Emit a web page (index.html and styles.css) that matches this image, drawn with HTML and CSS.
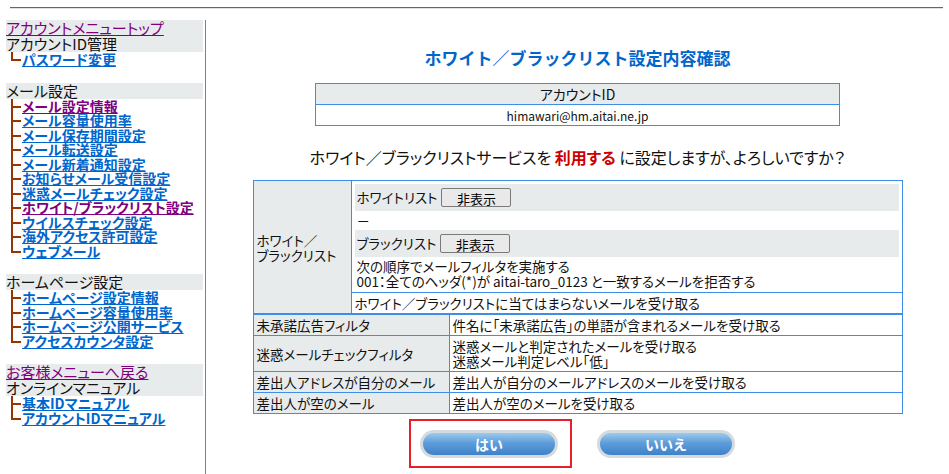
FILE: index.html
```html
<!DOCTYPE html>
<html lang="ja">
<head>
  <meta charset="UTF-8">
  <title>ホワイト／ブラックリスト設定内容確認</title>
  <link rel="stylesheet" href="styles.css">
</head>
<body>

<div class="top-line"></div>

<div class="page">
  <div class="side-menu">
    <div class="menu-head"><a href="#" class="visited">アカウントメニュートップ</a></div>
    <div class="menu-head">アカウントID管理</div>
    <ul class="menu-tree">
      <li><a href="#">パスワード変更</a></li>
    </ul>

    <div class="menu-head">メール設定</div>
    <ul class="menu-tree">
      <li><a href="#" class="visited">メール設定情報</a></li>
      <li><a href="#">メール容量使用率</a></li>
      <li><a href="#">メール保存期間設定</a></li>
      <li><a href="#">メール転送設定</a></li>
      <li><a href="#">メール新着通知設定</a></li>
      <li><a href="#">お知らせメール受信設定</a></li>
      <li><a href="#">迷惑メールチェック設定</a></li>
      <li><a href="#" class="visited">ホワイト/ブラックリスト設定</a></li>
      <li><a href="#">ウイルスチェック設定</a></li>
      <li><a href="#">海外アクセス許可設定</a></li>
      <li><a href="#">ウェブメール</a></li>
    </ul>

    <div class="menu-head">ホームページ設定</div>
    <ul class="menu-tree">
      <li><a href="#">ホームページ設定情報</a></li>
      <li><a href="#">ホームページ容量使用率</a></li>
      <li><a href="#">ホームページ公開サービス</a></li>
      <li><a href="#">アクセスカウンタ設定</a></li>
    </ul>

    <div class="menu-head"><a href="#" class="visited">お客様メニューへ戻る</a></div>
    <div class="menu-head">オンラインマニュアル</div>
    <ul class="menu-tree">
      <li><a href="#">基本IDマニュアル</a></li>
      <li><a href="#">アカウントIDマニュアル</a></li>
    </ul>
  </div>

  <div class="content">
    <h1 class="page-title">ホワイト／ブラックリスト設定内容確認</h1>

    <table class="account-table">
      <tr><th>アカウントID</th></tr>
      <tr><td>himawari@hm.aitai.ne.jp</td></tr>
    </table>

    <p class="confirm-text">ホワイト／ブラックリストサービスを <strong>利用する</strong> に設定しますが、よろしいですか？</p>

    <table class="list-table">
      <tr>
        <th class="col-narrow" rowspan="2">ホワイト／<br>ブラックリスト</th>
        <td class="inner-cell">
          <div class="sub-row gray">ホワイトリスト <button class="small-btn">非表示</button></div>
          <div class="sub-row">－</div>
          <div class="sub-row gray">ブラックリスト <button class="small-btn">非表示</button></div>
          <div class="sub-text">次の順序でメールフィルタを実施する<br>001：全てのヘッダ(*)が aitai-taro_0123 と一致するメールを拒否する</div>
        </td>
      </tr>
      <tr>
        <td>ホワイト／ブラックリストに当てはまらないメールを受け取る</td>
      </tr>
    </table>

    <table class="list-table">
      <tr>
        <th class="col-wide">未承諾広告フィルタ</th>
        <td>件名に「未承諾広告」の単語が含まれるメールを受け取る</td>
      </tr>
      <tr>
        <th>迷惑メールチェックフィルタ</th>
        <td>迷惑メールと判定されたメールを受け取る<br>迷惑メール判定レベル「低」</td>
      </tr>
      <tr>
        <th>差出人アドレスが自分のメール</th>
        <td>差出人が自分のメールアドレスのメールを受け取る</td>
      </tr>
      <tr>
        <th>差出人が空のメール</th>
        <td>差出人が空のメールを受け取る</td>
      </tr>
    </table>

    <div class="btn-row">
      <span class="btn-wrap marked"><button class="pill-btn">はい</button></span>
      <span class="btn-wrap"><button class="pill-btn">いいえ</button></span>
    </div>
  </div>
</div>

</body>
</html>
```

FILE: styles.css
```css
* {
  margin: 0;
  padding: 0;
  box-sizing: border-box;
}

body {
  font-family: "Noto Sans CJK JP", "Noto Sans", sans-serif;
  font-feature-settings: "palt";
  font-size: 14px;
  color: #111;
  background-color: #fff;
}

.top-line {
  height: 2px;
  margin: 7px 6px 0 10px;
  border-top: 1px solid #666;
  border-bottom: 1px solid #e2e2e2;
}

.page {
  display: flex;
  margin-top: 11px;
  min-height: 454px;
}

/* Side menu */
.side-menu {
  width: 200px;
  margin-left: 6px;
  padding-right: 2px;
  border-right: 1px solid #3d8fe6;
}

.menu-head {
  background-color: #e8ebec;
  line-height: 16px;
  font-size: 15px;
  white-space: nowrap;
}

.menu-head a {
  color: #800080;
}

.menu-tree {
  list-style: none;
  margin-bottom: 16px;
}

.menu-tree li {
  position: relative;
  padding-left: 16px;
  line-height: 14.5px;
  font-size: 14px;
  font-weight: bold;
  white-space: nowrap;
}

.menu-tree li::before {
  content: '';
  position: absolute;
  left: 5px;
  top: 0;
  bottom: 0;
  width: 2px;
  background-color: #993300;
}

.menu-tree li:last-child::before {
  bottom: auto;
  height: 9px;
}

.menu-tree li::after {
  content: '';
  position: absolute;
  left: 5px;
  top: 7px;
  width: 10px;
  height: 2px;
  background-color: #993300;
}

.menu-tree a {
  color: #0066cc;
}

.menu-tree a.visited {
  color: #800080;
}

/* Main content */
.content {
  flex: 1;
  padding-top: 28px;
  text-align: center;
}

.page-title {
  font-size: 17px;
  font-feature-settings: normal;
  line-height: 20px;
  color: #0066cc;
  font-weight: bold;
  margin-bottom: 15px;
}

.account-table {
  width: 525px;
  margin: 0 auto;
  border-collapse: collapse;
  border: 1px solid #3d8fe6;
}

.account-table th,
.account-table td {
  border: 1px solid #3d8fe6;
  text-align: center;
  height: 21px;
  font-weight: normal;
}

.account-table th {
  background-color: #e8ebec;
  font-size: 14px;
}

.account-table td {
  font-size: 12px;
}

.confirm-text {
  font-size: 16px;
  line-height: 20px;
  margin: 21px 0 13px;
}

.confirm-text strong {
  color: #cc0000;
}

.list-table {
  width: 650px;
  margin: 0 auto;
  border-collapse: collapse;
  border: 1px solid #3d8fe6;
  font-size: 13.5px;
  text-align: left;
}

.list-table th,
.list-table td {
  border: 1px solid #3d8fe6;
  padding: 3px 3px 2px;
  line-height: 15px;
  font-weight: normal;
  vertical-align: middle;
}

.list-table th {
  background-color: #e8ebec;
}

.col-narrow {
  width: 98px;
}

.col-wide {
  width: 196px;
}

.list-table td.inner-cell {
  padding: 3px 3px 1px;
}

.sub-row {
  display: flex;
  align-items: center;
  gap: 4px;
  height: 19px;
  padding: 0 2px;
}

.sub-row.gray {
  background-color: #e8ebec;
  height: 27px;
}

.sub-text {
  padding: 2px 2px;
}

.small-btn {
  width: 70px;
  height: 19px;
  font-family: inherit;
  font-size: 13px;
  background-color: #e9e9e9;
  border: 1px solid #7a7a7a;
  border-radius: 2px;
}

/* Buttons */
.btn-row {
  display: flex;
  justify-content: center;
  gap: 39px;
  margin-top: 16px;
}

.btn-wrap {
  position: relative;
  display: inline-block;
}

.btn-wrap.marked::after {
  content: '';
  position: absolute;
  top: -11px;
  left: -11px;
  right: -14px;
  bottom: -10px;
  border: 2px solid #e5202b;
}

.pill-btn {
  display: block;
  width: 138px;
  height: 28px;
  border-radius: 14px;
  border: 3px solid #d5dadd;
  background: linear-gradient(#9ccaee, #5e9ddb 45%, #3f81c8);
  color: #fff;
  font-family: inherit;
  font-size: 14px;
  font-weight: bold;
  cursor: pointer;
}
```
